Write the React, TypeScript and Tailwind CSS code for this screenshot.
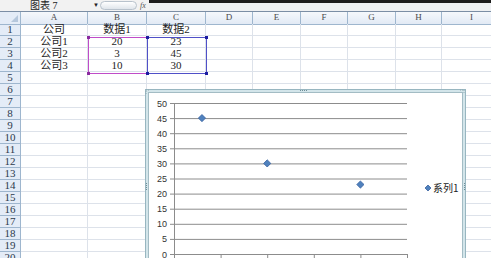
import React from "react";

const cols = [
  { name: "A", w: 67 },
  { name: "B", w: 59 },
  { name: "C", w: 59 },
  { name: "D", w: 47 },
  { name: "E", w: 48 },
  { name: "F", w: 47 },
  { name: "G", w: 48 },
  { name: "H", w: 46 },
  { name: "I", w: 60 },
];

const data: Record<number, string[]> = {
  1: ["公司", "数据1", "数据2"],
  2: ["公司1", "20", "23"],
  3: ["公司2", "3", "45"],
  4: ["公司3", "10", "30"],
};

const rows = Array.from({ length: 20 }, (_, i) => i + 1);
const cellFont = { fontFamily: '"Liberation Serif", "Noto Sans CJK SC", serif' };

// scatter: x = 数据1, y = 数据2
const points = [
  [3, 45],
  [10, 30],
  [20, 23],
];
const px = (v: number) => 174 + v * 9.32;
const py = (v: number) => 254 - v * 3.02;

const Diamond = ({ x, y, r = 3.6 }: { x: number; y: number; r?: number }) => (
  <polygon
    points={`${x},${y - r} ${x + r},${y} ${x},${y + r} ${x - r},${y}`}
    fill="#4f81bd"
    stroke="#3a62a0"
    strokeWidth={0.8}
  />
);

const Chart = () => {
  const ticks = [0, 5, 10, 15, 20, 25, 30, 35, 40, 45, 50];
  return (
    <div className="absolute left-[145px] top-[89px] w-[321px] h-[180px] border border-[#98b6c0] bg-[#d3e5ea] p-[2px]">
      <div className="w-full h-full border border-[#a3bcc4] bg-white" />
      <svg className="absolute -left-px -top-px" width={321} height={180}>
        <g transform="translate(-145,-89)">
          {ticks.map((t) => (
            <g key={t}>
              <line x1={170} x2={407} y1={py(t) + 0.5} y2={py(t) + 0.5} stroke="#8c8c8c" strokeWidth={1} />
              <text
                x={167}
                y={py(t) + 3.5}
                textAnchor="end"
                fontSize={9}
                fill="#333"
                fontFamily='"Liberation Sans", sans-serif'
              >
                {t}
              </text>
            </g>
          ))}
          <line x1={174.5} x2={174.5} y1={py(50)} y2={258} stroke="#8c8c8c" strokeWidth={1} />
          {[0, 5, 10, 15, 20, 25].map((t) => (
            <line key={t} x1={px(t) + 0.5} x2={px(t) + 0.5} y1={254} y2={258} stroke="#8c8c8c" strokeWidth={1} />
          ))}
          {points.map(([x, y]) => (
            <Diamond key={x} x={px(x)} y={py(y)} />
          ))}
          <Diamond x={428} y={188} r={3} />
          <text x={433} y={192} fontSize={10} fill="#222" fontFamily='"Noto Sans CJK SC", sans-serif'>
            系列1
          </text>
          {/* handles */}
          {[300, 302, 304, 306].map((x) => (
            <rect key={x} x={x} y={90} width={1} height={1} fill="#6f8e98" />
          ))}
          {[183, 185, 187, 189].map((y) => (
            <g key={y}>
              <rect x={146} y={y} width={1} height={1} fill="#6f8e98" />
              <rect x={464} y={y} width={1} height={1} fill="#6f8e98" />
            </g>
          ))}
          <path d="M146 94 V90 H150" fill="none" stroke="#8fa9b2" strokeWidth={1} strokeDasharray="1 1" />
          <path d="M460 90 H464 V94" fill="none" stroke="#8fa9b2" strokeWidth={1} strokeDasharray="1 1" />
        </g>
      </svg>
    </div>
  );
};

const Selection = ({ left, color, handle }: { left: number; color: string; handle: string }) => (
  <div
    className="absolute top-[37px] h-[37px] w-[60px] border"
    style={{ left, borderColor: color }}
  >
    <span className="absolute -left-[2px] -top-[2px] w-[3px] h-[3px]" style={{ background: handle }} />
    <span className="absolute -right-[2px] -top-[2px] w-[3px] h-[3px]" style={{ background: handle }} />
    <span className="absolute -left-[2px] -bottom-[2px] w-[3px] h-[3px]" style={{ background: handle }} />
    <span className="absolute -right-[2px] -bottom-[2px] w-[3px] h-[3px]" style={{ background: handle }} />
  </div>
);

export default function App() {
  const template = `21px ${cols.map((c) => c.w + "px").join(" ")}`;
  return (
    <div className="relative w-[491px] h-[258px] overflow-hidden bg-white">
      {/* formula bar */}
      <div className="flex h-[11px] bg-[#f2f2f2] text-[10px] leading-[11px]" style={cellFont}>
        <div className="flex w-[100px] items-center pl-[30px] text-[#222]">
          <span>图表 7</span>
          <span className="ml-auto mr-[1px] text-[6px]">▼</span>
        </div>
        <div className="mt-[1px] h-[9px] w-[37px] rounded-full border border-[#b8c2cc] bg-gradient-to-b from-[#ffffff] to-[#dfe5eb]" />
        <div className="w-[12px] pl-[3px] text-[8px] italic text-[#555]">fx</div>
        <div className="flex-1 flex flex-col">
          <div className="h-[3px] bg-[#1c1c1c]" />
          <div className="flex-1 bg-[#eef0f2]" />
        </div>
      </div>
      <div className="h-px bg-[#7b8ea5]" />

      {/* sheet */}
      <div className="grid" style={{ gridTemplateColumns: template, gridAutoRows: "12px", ...cellFont }}>
        <div className="h-[13px] border-r border-b border-[#9eb6ce] bg-[#e4ecf7] relative">
          <span className="absolute right-[2px] bottom-[2px] w-0 h-0 border-l-[7px] border-l-transparent border-b-[7px] border-b-[#b5c7dc]" />
        </div>
        {cols.map((c) => (
          <div
            key={c.name}
            className="h-[13px] flex items-center justify-center border-r border-b border-[#9eb6ce] bg-gradient-to-b from-[#f5f8fc] to-[#e2eaf5] text-[9px] text-[#4a4a4a]"
          >
            {c.name}
          </div>
        ))}
        {rows.map((r) => (
          <React.Fragment key={r}>
            <div className="flex items-center justify-center border-r border-b border-[#9eb6ce] bg-[#e4ecf7] text-[11px] leading-none text-[#2c3a4c]">
              {r}
            </div>
            {cols.map((c, ci) => (
              <div
                key={c.name}
                className="flex items-center justify-center border-r border-b border-[#dde2ea] text-[11px] leading-none text-[#1e1e1e]"
              >
                {data[r]?.[ci] ?? ""}
              </div>
            ))}
          </React.Fragment>
        ))}
      </div>

      <Selection left={88} color="#c04cc8" handle="#8a2aa0" />
      <Selection left={147} color="#5050c8" handle="#1c1ca0" />
      <Chart />
    </div>
  );
}
